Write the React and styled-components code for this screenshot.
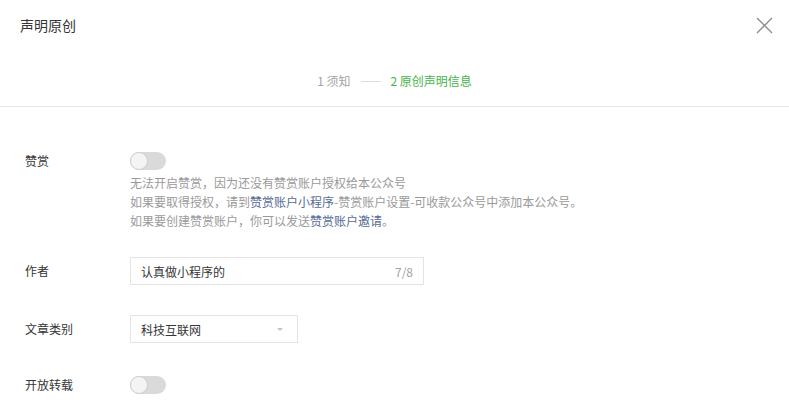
import React from 'react';
import styled, { createGlobalStyle } from 'styled-components';

const GlobalStyle = createGlobalStyle`
  html, body {
    margin: 0;
    padding: 0;
    background: #fff;
  }
  body {
    font-family: "Noto Sans CJK SC", "Noto Sans", "Liberation Sans", sans-serif;
    color: #353535;
  }
`;

const Dialog = styled.div`
  width: 789px;
  height: 400px;
  overflow: hidden;
  background: #fff;
`;

const Header = styled.div`
  display: flex;
  justify-content: space-between;
  align-items: center;
  height: 50px;
  padding: 0 15px 0 20px;
`;

const Title = styled.h3`
  margin: 0;
  font-size: 14px;
  font-weight: 400;
  color: #353535;
  line-height: 18px;
`;

const CloseButton = styled.button`
  width: 20px;
  height: 20px;
  padding: 0;
  border: 0;
  background: transparent;
  display: flex;
  align-items: center;
  justify-content: center;
  color: #8c8c8c;
  cursor: pointer;
`;

const Steps = styled.div`
  display: flex;
  justify-content: center;
  align-items: center;
  gap: 10px;
  padding: 21px 0 15px;
  line-height: 20px;
  font-size: 12px;
  border-bottom: 1px solid #e7e7e7;
`;

const Step = styled.span`
  color: ${(p) => (p.$active ? '#44b549' : '#a3a3a3')};
`;

const StepLine = styled.span`
  width: 20px;
  height: 1px;
  background: #dedede;
`;

const Form = styled.div`
  padding: 0 25px;
`;

const Row = styled.div`
  display: flex;
  align-items: flex-start;
  margin-top: ${(p) => p.$space}px;
`;

const Label = styled.label`
  width: 105px;
  flex-shrink: 0;
  font-size: 12px;
  color: #353535;
  line-height: ${(p) => p.$h}px;
`;

const Field = styled.div`
  display: flex;
  flex-direction: column;
`;

const SwitchTrack = styled.span`
  display: block;
  width: 36px;
  height: 18px;
  margin: 1px 0;
  border-radius: 9px;
  background: #dadada;
  position: relative;
`;

const SwitchKnob = styled.span`
  position: absolute;
  left: 0;
  top: 0;
  width: 18px;
  height: 18px;
  box-sizing: border-box;
  border-radius: 50%;
  background: #f4f4f4;
  border: 1px solid #d0d0d0;
`;

const Tips = styled.p`
  margin: 2px 0 0;
  font-size: 12px;
  line-height: 19px;
  color: #9a9a9a;
`;

const TipLink = styled.a`
  color: #576b95;
  text-decoration: none;
`;

const InputBox = styled.div`
  display: flex;
  align-items: center;
  justify-content: space-between;
  width: ${(p) => p.$w}px;
  height: 28px;
  box-sizing: border-box;
  padding: 0 10px;
  border: 1px solid #e4e4e4;
  font-size: 12px;
  color: #353535;
`;

const Counter = styled.span`
  color: #a3a3a3;
`;

const Arrow = styled.span`
  width: 0;
  height: 0;
  margin-right: 4px;
  border-left: 3px solid transparent;
  border-right: 3px solid transparent;
  border-top: 3px solid #c4c4c4;
`;

const Switch = () => (
  <SwitchTrack>
    <SwitchKnob />
  </SwitchTrack>
);

const CloseIcon = () => (
  <svg width="17" height="17" viewBox="0 0 17 17" fill="none">
    <path d="M1 1l15 15M16 1L1 16" stroke="currentColor" strokeWidth="1.3" />
  </svg>
);

export default function App() {
  return (
    <Dialog>
      <GlobalStyle />
      <Header>
        <Title>声明原创</Title>
        <CloseButton aria-label="关闭">
          <CloseIcon />
        </CloseButton>
      </Header>

      <Steps>
        <Step>1 须知</Step>
        <StepLine />
        <Step $active>2 原创声明信息</Step>
      </Steps>

      <Form>
        <Row $space={44}>
          <Label $h={20}>赞赏</Label>
          <Field>
            <Switch />
            <Tips>
              无法开启赞赏，因为还没有赞赏账户授权给本公众号
              <br />
              如果要取得授权，请到<TipLink>赞赏账户小程序</TipLink>-赞赏账户设置-可收款公众号中添加本公众号。
              <br />
              如果要创建赞赏账户，你可以发送<TipLink>赞赏账户邀请</TipLink>。
            </Tips>
          </Field>
        </Row>

        <Row $space={27}>
          <Label $h={28}>作者</Label>
          <InputBox $w={294}>
            <span>认真做小程序的</span>
            <Counter>7/8</Counter>
          </InputBox>
        </Row>

        <Row $space={30}>
          <Label $h={28}>文章类别</Label>
          <InputBox $w={168}>
            <span>科技互联网</span>
            <Arrow />
          </InputBox>
        </Row>

        <Row $space={32}>
          <Label $h={20}>开放转载</Label>
          <Field>
            <Switch />
            <Tips>
              开启后所有公众号都可转载此文章，无需申请授权。<TipLink>了解转载规则</TipLink>
            </Tips>
          </Field>
        </Row>
      </Form>
    </Dialog>
  );
}
